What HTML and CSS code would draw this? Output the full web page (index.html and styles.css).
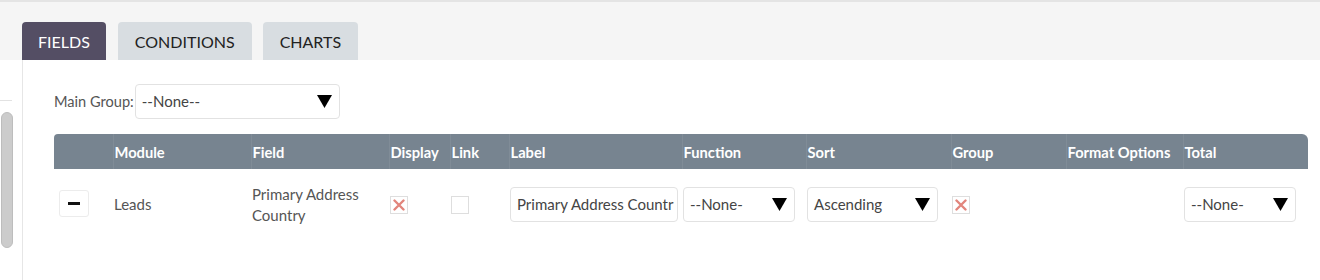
FILE: index.html
```html
<!DOCTYPE html>
<html>
<head>
<meta charset="utf-8">
<link rel="stylesheet" href="styles.css">
</head>
<body>
<div class="topbar">
  <div class="tabs">
    <div class="tab active">FIELDS</div>
    <div class="tab">CONDITIONS</div>
    <div class="tab">CHARTS</div>
  </div>
</div>
<div class="main">
  <div class="sidebar">
    <div class="side-line"></div>
    <div class="scrollbar"></div>
  </div>
  <div class="content">
    <div class="group-row">
      <span class="group-label">Main Group:</span>
      <div class="select main-select"><span class="sel-text">--None--</span><svg class="arrow" width="15" height="13" viewBox="0 0 15 13"><path d="M0 0 H15 L7.5 13 Z" fill="#000"/></svg></div>
    </div>
    <table class="fields">
      <colgroup>
        <col style="width:59px"><col style="width:138px"><col style="width:138px"><col style="width:61px"><col style="width:59px"><col style="width:173px"><col style="width:124px"><col style="width:145px"><col style="width:115px"><col style="width:117px"><col style="width:125px">
      </colgroup>
      <thead>
        <tr>
          <th></th><th>Module</th><th>Field</th><th>Display</th><th>Link</th><th>Label</th><th>Function</th><th>Sort</th><th>Group</th><th>Format Options</th><th>Total</th>
        </tr>
      </thead>
      <tbody>
        <tr>
          <td><div class="minus-btn"><span class="bar"></span></div></td>
          <td>Leads</td>
          <td>Primary Address<br>Country</td>
          <td><div class="check"><svg width="12" height="12" viewBox="0 0 12 12"><path d="M1.5 1.5 L10.5 10.5 M10.5 1.5 L1.5 10.5" stroke="#e2857c" stroke-width="2.4" stroke-linecap="round"/></svg></div></td>
          <td><div class="check"></div></td>
          <td><div class="input">Primary Address Countr</div></td>
          <td><div class="select fn-select"><span class="sel-text">--None-</span><svg class="arrow" width="15" height="13" viewBox="0 0 15 13"><path d="M0 0 H15 L7.5 13 Z" fill="#000"/></svg></div></td>
          <td><div class="select sort-select"><span class="sel-text">Ascending</span><svg class="arrow" width="15" height="13" viewBox="0 0 15 13"><path d="M0 0 H15 L7.5 13 Z" fill="#000"/></svg></div></td>
          <td><div class="check"><svg width="12" height="12" viewBox="0 0 12 12"><path d="M1.5 1.5 L10.5 10.5 M10.5 1.5 L1.5 10.5" stroke="#e2857c" stroke-width="2.4" stroke-linecap="round"/></svg></div></td>
          <td></td>
          <td><div class="select fn-select"><span class="sel-text">--None-</span><svg class="arrow" width="15" height="13" viewBox="0 0 15 13"><path d="M0 0 H15 L7.5 13 Z" fill="#000"/></svg></div></td>
        </tr>
      </tbody>
    </table>
  </div>
</div>
</body>
</html>
```
FILE: styles.css
```css
html, body {
  margin: 0;
  padding: 0;
  background: #ffffff;
  font-family: Lato, "Open Sans", "Liberation Sans", sans-serif;
  color: #555;
  width: 1320px;
  height: 280px;
  overflow: hidden;
}

.topbar {
  height: 58px;
  background: #f5f5f5;
  border-top: 2px solid #e4e4e4;
  display: flex;
  align-items: flex-end;
  padding-left: 22px;
}

.tabs {
  display: flex;
  gap: 11px;
}

.tab {
  height: 38px;
  line-height: 39px;
  padding: 0 17px;
  background: #d8dde1;
  color: #222;
  font-size: 16px;
  border-radius: 4px 4px 0 0;
}

.tab.active {
  background: #544e64;
  color: #fff;
  margin-right: 1px;
  padding: 0 16px 0 16px;
}

.main {
  display: flex;
  height: 220px;
}

.sidebar {
  width: 23px;
  border-right: 1px solid #e6e6e6;
  padding-top: 40px;
  box-sizing: border-box;
}

.side-line {
  width: 12px;
  height: 1px;
  background: #e2e2e2;
}

.scrollbar {
  width: 10px;
  height: 134px;
  margin-top: 11px;
  margin-left: 1px;
  border: 1px solid #bdbdbd;
  background: #cccccc;
  border-radius: 6px;
}

.content {
  flex: 1;
  padding: 24px 0 0 31px;
}

.group-row {
  display: flex;
  align-items: center;
  gap: 1px;
  font-size: 14.6px;
  height: 34px;
}

.group-label {
  color: #555;
}

.select {
  box-sizing: border-box;
  height: 35px;
  border: 1px solid #e2e2e2;
  border-radius: 4px;
  background: #fff;
  display: flex;
  align-items: center;
  justify-content: space-between;
  padding: 0 7px 0 6px;
  font-size: 15px;
  color: #444;
}

.main-select {
  width: 205px;
}

.arrow {
  display: block;
  flex: none;
}

.fields {
  margin-top: 16px;
  border-collapse: collapse;
  table-layout: fixed;
  width: 1254px;
}

.fields th {
  background: #778490;
  color: #fff;
  font-weight: 700;
  font-size: 14.7px;
  text-align: left;
  height: 35px;
  padding: 0 0 0 1px;
  border-left: 1px solid #808c97;
  white-space: nowrap;
}

.fields th:first-child {
  border-left: none;
  border-top-left-radius: 4px;
}

.fields th:last-child {
  border-top-right-radius: 6px;
}

.fields td {
  height: 71px;
  padding: 0 0 0 1px;
  font-size: 15px;
  color: #555;
  line-height: 21px;
  vertical-align: middle;
}

.fields td:first-child {
  padding-left: 5px;
}

.minus-btn {
  width: 30px;
  height: 27px;
  box-sizing: border-box;
  border: 1px solid #ececec;
  border-radius: 3px;
  display: flex;
  align-items: center;
  justify-content: center;
  margin-top: -3px;
}

.minus-btn .bar {
  width: 12px;
  height: 3px;
  background: #111;
}

.check {
  width: 18px;
  height: 18px;
  box-sizing: border-box;
  border: 1px solid #dedede;
  display: flex;
  align-items: center;
  justify-content: center;
  background: #fff;
}

.input {
  box-sizing: border-box;
  width: 168px;
  height: 35px;
  border: 1px solid #e2e2e2;
  border-radius: 4px;
  padding: 0 0 0 6px;
  font-size: 15px;
  color: #444;
  white-space: nowrap;
  overflow: hidden;
  display: flex;
  align-items: center;
}

.fn-select {
  width: 112px;
}

.sort-select {
  width: 131px;
}
```
